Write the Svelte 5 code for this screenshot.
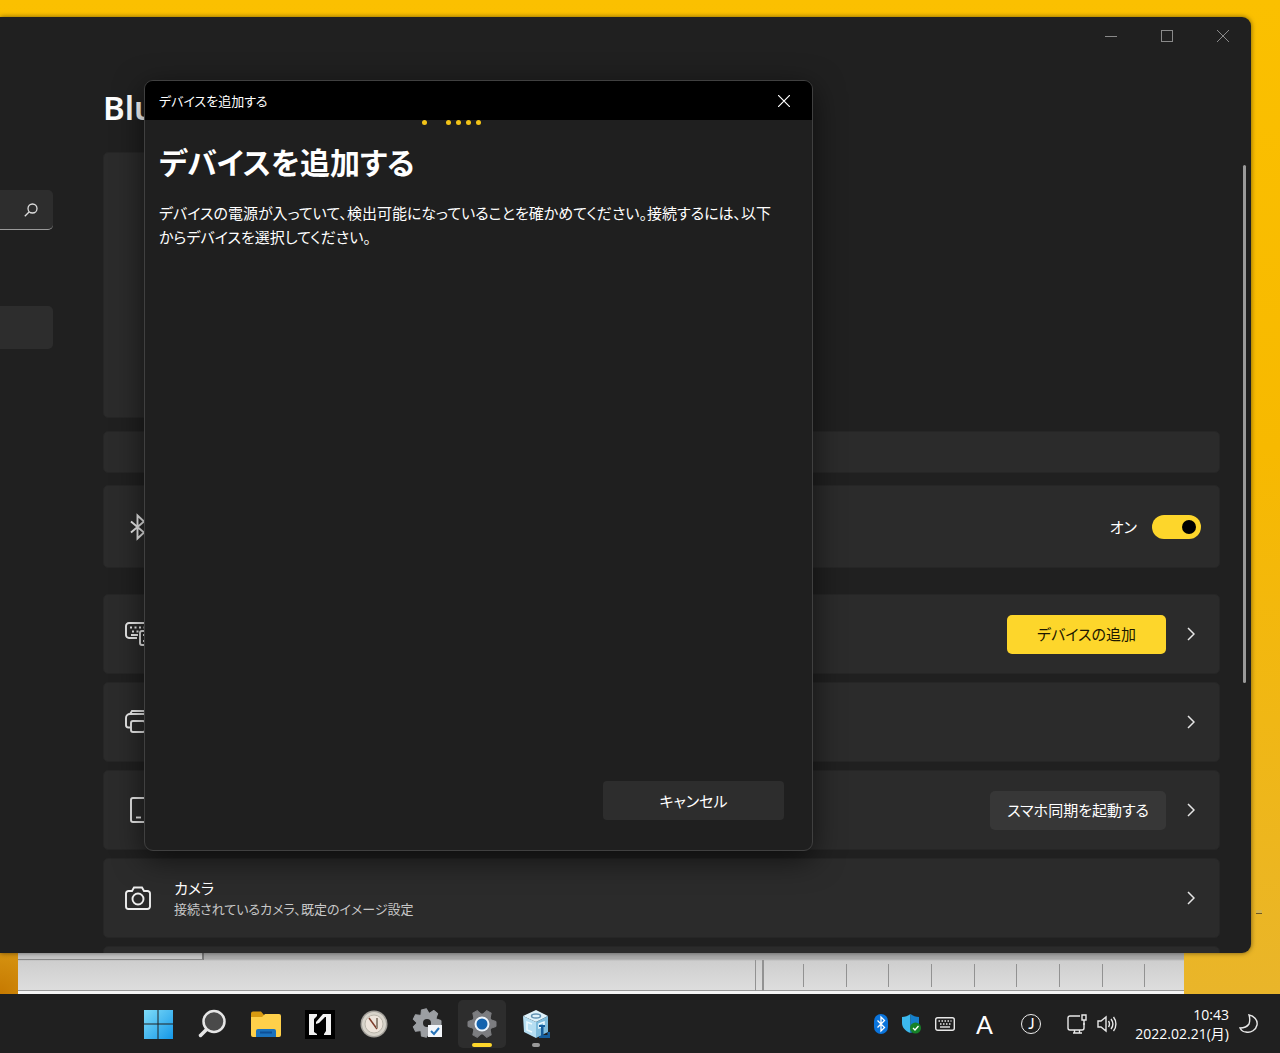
<!--
  App.svelte: desktop with the settings window behind the "add a device" dialog.
  The windows float on the desktop; everything inside them is laid out by flex.
-->
<script lang="ts">
	type Row = {
		icon: 'devices' | 'printer' | 'phone' | 'camera';
		label: string;
		title?: string;
		note?: string;
		action?: string;
		primary?: boolean;
	};

	const rows: Row[] = [
		{ icon: 'devices', label: 'デバイス', action: 'デバイスの追加', primary: true },
		{ icon: 'printer', label: 'プリンターとスキャナー' },
		{ icon: 'phone', label: 'スマホ同期', action: 'スマホ同期を起動する' },
		{
			icon: 'camera',
			label: 'カメラ',
			title: 'カメラ',
			note: '接続されているカメラ、既定のイメージ設定'
		}
	];

	const cells = Array.from({ length: 10 }, (_, i) => i);

	let bluetoothOn = $state(true);
	let dialogOpen = $state(true);

	const openDialog = (): void => {
		dialogOpen = true;
	};
	const closeDialog = (): void => {
		dialogOpen = false;
	};

	// tooth angles of a gear, the first one pointing right
	const teeth = (count: number): number[] =>
		Array.from({ length: count }, (_, i) => 90 + (360 / count) * i);
</script>

{#snippet rowIcon(name: string)}
	<svg class="row-icon" viewBox="0 0 28 28" aria-hidden="true">
		{#if name === 'devices'}
			<path d="M13 18H5a3 3 0 0 1-3-3V6a3 3 0 0 1 3-3h18a3 3 0 0 1 3 3v3" />
			<path d="M6 7.500h2M10.500 7.500h2M15 7.500h2M19.500 7.500h2M8 11.500h2M12.500 11.500h2M7 15h7" />
			<rect x="16" y="11" width="9" height="14" rx="2" />
			<path d="M19 15h3M19 21h3" />
		{:else if name === 'printer'}
			<path d="M6.500 19.500H4.500a2.500 2.500 0 0 1-2.500-2.500v-7a4 4 0 0 1 4-4h16a4 4 0 0 1 4 4v7a2.500 2.500 0 0 1-2.500 2.500h-2" />
			<path d="M6 6l2-3h12l2 3" />
			<rect x="7" y="13" width="14" height="11" rx="2" />
		{:else if name === 'phone'}
			<rect x="7" y="2" width="15" height="24" rx="2" />
			<path d="M12 21.500h5" />
		{:else}
			<path d="M4.500 7H8l2-3.500h8L20 7h3.500A2.500 2.500 0 0 1 26 9.500v13a2.500 2.500 0 0 1-2.500 2.500h-19A2.500 2.500 0 0 1 2 22.500v-13A2.500 2.500 0 0 1 4.500 7z" />
			<circle cx="14" cy="15" r="5.500" />
		{/if}
	</svg>
{/snippet}

{#snippet gear(cx: number, cy: number, count: number, fill: string)}
	<g {fill} stroke={fill} stroke-linejoin="round" transform="translate({cx} {cy})">
		<circle r="10" />
		{#each teeth(count) as angle}
			<path d="M-4.500-8L-2.500-14h5L4.500-8z" transform="rotate({angle})" />
		{/each}
	</g>
{/snippet}

<div class="desktop">
	<main class="workspace">
		<div class="sheet-window" aria-hidden="true">
			<div class="sheet-tab"></div>
			<div class="sheet-status">
				{#each cells as cell (cell)}
					<span></span>
				{/each}
			</div>
		</div>
		<div class="desk-mark" aria-hidden="true"></div>

		<section class="settings" aria-label="設定">
			<header class="caption">
				<button aria-label="最小化">
					<svg viewBox="0 0 12 12"><path d="M0 6.500h12" /></svg>
				</button>
				<button aria-label="最大化">
					<svg viewBox="0 0 12 12"><rect x=".5" y=".5" width="11" height="11" /></svg>
				</button>
				<button aria-label="閉じる">
					<svg viewBox="0 0 12 12"><path d="M0 0l12 12M12 0L0 12" /></svg>
				</button>
			</header>

			<div class="settings-body">
				<nav class="sidebar" aria-label="メニュー">
					<button class="search" aria-label="検索">
						<svg viewBox="0 0 14 14"><circle cx="8.500" cy="5.500" r="4.500" /><path d="M5.300 8.700L.8 13.200" /></svg>
					</button>
					<a class="nav-current" href="#devices" aria-label="デバイス"></a>
				</nav>

				<div class="content">
					<h1>Blu</h1>
					<div class="card preview"></div>
					<div class="card banner"></div>
					<div class="card bluetooth">
						<svg class="row-icon" viewBox="0 0 28 28" aria-hidden="true">
							<path d="M7 8.500l13 11-6.500 6v-23l6.500 6-13 11" />
						</svg>
						<label class="switch">
							<span>オン</span>
							<input type="checkbox" bind:checked={bluetoothOn} />
						</label>
					</div>
					<ul class="rows">
						{#each rows as row (row.icon)}
							<li class="card row">
								{@render rowIcon(row.icon)}
								<div class="row-text">
									{#if row.title}<span class="row-title">{row.title}</span>{/if}
									{#if row.note}<span class="row-note">{row.note}</span>{/if}
								</div>
								{#if row.action}
									<button class="action" class:primary={row.primary} onclick={openDialog}>{row.action}</button>
								{/if}
								<a class="more" href="#{row.icon}" aria-label={row.label}>
									<svg viewBox="0 0 8 14"><path d="M1 1l6 6-6 6" /></svg>
								</a>
							</li>
						{/each}
						<li class="card row"></li>
					</ul>
				</div>
				<div class="scrollbar"></div>
			</div>
		</section>

		{#if dialogOpen}
			<div class="dialog" role="dialog" aria-labelledby="dialog-title">
				<header class="dialog-bar">
					<span>デバイスを追加する</span>
					<button aria-label="閉じる" onclick={closeDialog}>
						<svg viewBox="0 0 12 12"><path d="M0 0l12 12M12 0L0 12" /></svg>
					</button>
				</header>
				<div class="progress" aria-hidden="true"><i></i><i></i><i></i><i></i><i></i></div>
				<div class="dialog-body">
					<h2 id="dialog-title">デバイスを追加する</h2>
					<p>
						デバイスの電源が入っていて、検出可能になっていることを確かめてください。接続するには、以下<br />からデバイスを選択してください。
					</p>
				</div>
				<footer class="dialog-foot">
					<button onclick={closeDialog}>キャンセル</button>
				</footer>
			</div>
		{/if}
	</main>

	<footer class="taskbar">
		<div class="apps">
			<button aria-label="スタート">
				<svg viewBox="0 0 32 32">
					<defs>
						<linearGradient id="win" x1="0" y1="0" x2="1" y2="1">
							<stop offset="0" stop-color="#7fdcf8" />
							<stop offset="1" stop-color="#1497e8" />
						</linearGradient>
					</defs>
					<path fill="url(#win)" d="M2 2h13.500v13.500H2zM16.500 2H31v13.500H16.500zM2 16.500h13.500V31H2zM16.500 16.500H31V31H16.500z" />
				</svg>
			</button>
			<button aria-label="検索">
				<svg viewBox="0 0 32 32">
					<path d="M10.500 21.500L4.500 27.500" stroke="#e6e6e6" stroke-width="3.500" stroke-linecap="round" />
					<circle cx="18" cy="13.500" r="10.500" fill="#4a4a4a" stroke="#e6e6e6" stroke-width="2.500" />
				</svg>
			</button>
			<button aria-label="エクスプローラー">
				<svg viewBox="0 0 32 32">
					<path d="M1 5.500a2 2 0 0 1 2-2h8l3 3.500v5H1z" fill="#d99a10" />
					<path d="M1 9h11l3-3h14a2 2 0 0 1 2 2v19a2 2 0 0 1-2 2H3a2 2 0 0 1-2-2z" fill="#ffd04a" />
					<path d="M6 29v-6a2 2 0 0 1 2-2h16a2 2 0 0 1 2 2v6z" fill="#1b72bd" />
					<path d="M10 24.500h12" stroke="#0d4f96" stroke-width="2" />
				</svg>
			</button>
			<button aria-label="エディター">
				<svg viewBox="0 0 32 32">
					<path d="M1 2h30v29H1z" fill="#000" />
					<path d="M5 6h8v2l-3 3v13l3 2v1H5z" fill="#f2f2f2" />
					<path d="M27 6h-8l-7 8v2l3-1 6-6h1v14l-2 3v1h7z" fill="#f2f2f2" />
				</svg>
			</button>
			<button aria-label="時計">
				<svg viewBox="0 0 32 32">
					<circle cx="16" cy="16" r="13.500" fill="#a3a09a" />
					<circle cx="16" cy="16" r="12" fill="#d8d4cb" />
					<circle cx="16" cy="16" r="9" fill="#eee5dc" stroke="#bab5aa" />
					<path d="M11 10l8 11" stroke="#7e3d2c" stroke-width="1.500" />
					<path d="M19 10v10" stroke="#94887b" stroke-width="2" />
				</svg>
			</button>
			<button aria-label="既定の設定">
				<svg viewBox="0 0 32 32">
					{@render gear(15, 15, 7, '#9c9fa3')}
					<circle cx="15" cy="15" r="4" fill="#252525" />
					<path d="M16 17h14v12H16z" fill="#f3f6fa" />
					<path d="M19 23l3 3 5-6" stroke="#2673b8" stroke-width="2" fill="none" />
				</svg>
			</button>
			<button class="active" aria-label="設定">
				<svg viewBox="0 0 32 32">
					{@render gear(16, 16, 6, '#7c7d80')}
					<circle cx="16" cy="16" r="7.500" fill="#eef5fb" />
					<circle cx="16" cy="16" r="5.500" fill="#1463ae" />
				</svg>
			</button>
			<button class="running" aria-label="ツール">
				<svg viewBox="0 0 32 32">
					<path d="M3 8l13-6 12 6-12 6z" fill="#dff2fb" />
					<path d="M3 8l13 6v16L4 24z" fill="#b5def2" />
					<path d="M28 8l-12 6v16l12-6z" fill="#7fbcdc" />
					<ellipse cx="16" cy="8" rx="4.500" ry="2" fill="none" stroke="#6393b4" stroke-width="1.500" />
					<path d="M12 16l-5-2v8l5 2M19 16l5-2v4l-5 2z" fill="none" stroke="#edfaff" stroke-width="1.500" />
					<path d="M19 17h6v2h-1.500v8h4v-3H30v6H19v-2h2v-9h-2z" fill="#155d9c" />
				</svg>
			</button>
		</div>

		<div class="tray">
			<svg class="tray-icon bt" viewBox="0 0 20 20" aria-hidden="true">
				<rect x="3" width="14" height="20" rx="7" fill="#0a74dc" />
				<path d="M6.500 6.500l7 7-3.500 3.500V3l3.500 3.500-7 7" stroke="#fff" stroke-width="1.300" fill="none" />
			</svg>
			<svg class="tray-icon" viewBox="0 0 20 20" aria-hidden="true">
				<path d="M9.500 0C7 2 4 3 1 3v6c0 4 3 8 8.500 10z" fill="#3cb9ee" />
				<path d="M9.500 0C12 2 15 3 18 3v6c0 4-3 8-8.500 10z" fill="#1580cc" />
				<circle cx="14.500" cy="14" r="5.500" fill="#168128" />
				<path d="M12 14l2 2 3.500-4" stroke="#fff" stroke-width="1.300" fill="none" />
			</svg>
			<svg class="tray-icon line keyboard" viewBox="0 0 20 20" aria-hidden="true">
				<rect x=".7" y="3.700" width="18.600" height="12.600" rx="2" />
				<path d="M3.500 7h13M5 10h11" stroke-dasharray="1.500 1.500" />
				<path d="M5 13h10" />
			</svg>
			<span class="ime-letter">A</span>
			<span class="ime-mode">J</span>
			<svg class="tray-icon line monitor" viewBox="0 0 20 20" aria-hidden="true">
				<path d="M13 2H3a2 2 0 0 0-2 2v10a2 2 0 0 0 2 2h12a2 2 0 0 0 2-2V9M6 19h9M7.500 16v3M12.500 16v3" />
				<path d="M15 1h4v5h-4zM17 6v5" />
			</svg>
			<svg class="tray-icon line" viewBox="0 0 20 20" aria-hidden="true">
				<path d="M1 7v6h3l5 4V3L4 7zM11.500 7c1.300 2 1.300 4 0 6M14 5c2.300 3 2.300 7 0 10M16.500 3c3.200 4 3.200 10 0 14" />
			</svg>
			<time class="clock" datetime="2022-02-21T10:43">
				<span>10:43</span>
				<span>2022.02.21(月)</span>
			</time>
			<svg class="tray-icon line moon" viewBox="0 0 20 20" aria-hidden="true">
				<path d="M10 1c5 1 9 5 8 10-1 5-6 8-11 7-3-0-5-2-6-4 4 0 7-1 9-4 1-3 1-6 0-9z" />
			</svg>
		</div>
	</footer>
</div>

<style>
	:global(body) {
		background: #202020;
	}

	.desktop {
		display: flex;
		flex-direction: column;
		min-height: 100vh;
		overflow: hidden;
		color: #fff;
		font-family: 'Open Sans', 'Noto Sans CJK JP', sans-serif;
		font-size: 15px;
		line-height: 24px;
		/* kana use their own widths, as in the system UI face */
		font-feature-settings: 'palt';
	}

	button {
		padding: 0;
		border: 0;
		background: none;
		color: inherit;
		font: inherit;
		font-feature-settings: inherit;
	}

	svg {
		display: block;
		fill: none;
	}

	.workspace {
		position: relative;
		flex: 1;
		overflow: hidden;
		background:
			radial-gradient(circle at 0 100%, #c67900 0, transparent 100px),
			linear-gradient(#fbc000, #f7b900 45%, #e9b52a);
	}

	/* Spreadsheet window peeking out below the settings window */
	.sheet-window {
		position: absolute;
		left: 18px;
		right: 96px;
		bottom: 0;
		box-sizing: border-box;
		height: 60px;
		display: flex;
		flex-direction: column;
		overflow: hidden;
		border-bottom: 3px solid #f4f4f4;
		background: linear-gradient(#a9a9a9 25px, #cecece 27px, #dedede);
		box-shadow: inset 0 -1px #999;
	}

	.sheet-tab {
		box-sizing: border-box;
		width: 186px;
		height: 26px;
		border-right: 2px solid #777;
		border-bottom: 1px solid #888;
		background: #c5c5c5;
	}

	.sheet-status {
		display: flex;
		flex: 1;
		width: 432px;
		margin-left: auto;
		margin-right: -3px;
	}

	.sheet-status span {
		box-sizing: border-box;
		flex: 1;
		margin: 4px 0;
		border-left: 1px solid #929292;
	}

	.sheet-status span:first-child {
		flex: 0 0 48px;
		margin: 0;
		background: linear-gradient(#929292, #929292) 6px 0 / 2px 100% no-repeat;
	}

	.desk-mark {
		position: absolute;
		right: 18px;
		bottom: 80px;
		width: 6px;
		height: 3px;
		border-bottom: 1px solid #6e5720;
		background: #d8b54c;
	}

	.settings {
		position: absolute;
		inset: 17px 29px 41px 0;
		display: flex;
		flex-direction: column;
		overflow: hidden;
		border-radius: 0 9px 9px 0;
		background: #202020;
		box-shadow: 0 0 5px #0008;
	}

	.caption {
		display: flex;
		justify-content: flex-end;
		flex: none;
		height: 38px;
	}

	.caption button {
		display: grid;
		place-items: center;
		width: 56px;
	}

	.caption svg {
		width: 12px;
		height: 12px;
		stroke: #8a8a8a;
	}

	.settings-body {
		display: flex;
		flex: 1;
		min-height: 0;
	}

	.sidebar {
		flex: none;
		width: 53px;
		display: flex;
		flex-direction: column;
		gap: 76px;
		padding-top: 135px;
	}

	.search {
		display: flex;
		align-items: center;
		justify-content: flex-end;
		height: 40px;
		box-sizing: border-box;
		padding-right: 15px;
		border-bottom: 1px solid #9a9a9a;
		border-radius: 0 5px 5px 0;
		background: #2d2d2d;
	}

	.search svg {
		width: 14px;
		height: 14px;
		stroke: #ddd;
		stroke-width: 1.3;
	}

	.nav-current {
		height: 43px;
		border-radius: 0 5px 5px 0;
		background: #2d2d2d;
	}

	.content {
		flex: 1;
		min-width: 0;
		display: flex;
		flex-direction: column;
		padding-left: 50px;
	}

	h1 {
		flex: none;
		margin: 29px 0 20px;
		font-family: 'Noto Sans', sans-serif;
		font-size: 33px;
		font-weight: 600;
		line-height: 48px;
	}

	.card {
		flex: none;
		box-sizing: border-box;
		border: 1px solid #262626;
		border-radius: 5px;
		background: #2b2b2b;
	}

	.preview {
		width: 30%;
		height: 266px;
	}

	.banner {
		height: 42px;
		margin-top: 13px;
	}

	.bluetooth {
		display: flex;
		align-items: center;
		justify-content: space-between;
		height: 83px;
		margin: 12px 0 26px;
		padding: 0 18px 0 20px;
	}

	.row-icon {
		flex: none;
		width: 28px;
		height: 28px;
		stroke: #eee;
		stroke-width: 1.9;
	}

	.switch {
		display: flex;
		align-items: center;
		gap: 15px;
	}

	.switch input {
		appearance: none;
		width: 49px;
		height: 24px;
		margin: 0;
		border-radius: 12px;
		background: #666;
	}

	.switch input::before {
		content: '';
		display: block;
		width: 14px;
		height: 14px;
		margin: 5px;
		border-radius: 50%;
		background: #000;
	}

	.switch input:checked {
		background: #fdd62b;
	}

	.switch input:checked::before {
		margin-left: 30px;
	}

	.rows {
		display: flex;
		flex-direction: column;
		gap: 8px;
		margin: 0;
		padding: 0;
		list-style: none;
	}

	.row {
		display: flex;
		align-items: center;
		height: 80px;
		padding: 0 24px 0 20px;
	}

	.row-text {
		flex: 1;
		display: flex;
		flex-direction: column;
		padding-left: 22px;
	}

	.row-title {
		line-height: 22px;
	}

	.row-note {
		color: #c8c8c8;
		font-size: 13px;
		line-height: 20px;
	}

	.action {
		height: 39px;
		padding: 0 17px;
		border-radius: 5px;
		background: #373737;
	}

	.action.primary {
		padding: 0 30px;
		background: #fdd62b;
		color: #1c1700;
	}

	.more svg {
		width: 8px;
		height: 14px;
		margin-left: 21px;
		stroke: #e6e6e6;
		stroke-width: 1.5;
	}

	.scrollbar {
		flex: none;
		width: 3px;
		height: 518px;
		margin: 110px 5px 0 23px;
		border-radius: 2px;
		background: #9a9a9a;
	}

	.dialog {
		position: absolute;
		inset: 80px 467px 143px 144px;
		display: flex;
		flex-direction: column;
		overflow: hidden;
		border: 1px solid #404040;
		border-radius: 9px;
		background: #1f1f1f;
		box-shadow: 0 8px 30px #0009;
	}

	.dialog-bar {
		display: flex;
		align-items: center;
		justify-content: space-between;
		height: 39px;
		padding-left: 14px;
		background: #000;
		font-size: 13px;
	}

	.dialog-bar button {
		display: grid;
		place-items: center;
		width: 56px;
		height: 37px;
	}

	.dialog-bar svg {
		width: 12px;
		height: 12px;
		stroke: #fff;
		stroke-width: 1.2;
	}

	.progress {
		display: flex;
		gap: 5px;
		height: 5px;
		padding-left: 41.5%;
	}

	.progress i {
		width: 5px;
		height: 5px;
		border-radius: 50%;
		background: #f2c318;
	}

	.progress i:first-child {
		margin-right: 14px;
	}

	.dialog-body {
		flex: 1;
		padding: 14px 14px 0;
	}

	h2 {
		margin: 0 0 14px;
		font-size: 30px;
		font-weight: 600;
		line-height: 48px;
	}

	p {
		margin: 0;
	}

	.dialog-foot {
		display: flex;
		justify-content: flex-end;
		padding: 0 28px 30px;
	}

	.dialog-foot button {
		width: 181px;
		height: 39px;
		border-radius: 4px;
		background: #2d2d2d;
	}

	.taskbar {
		display: flex;
		align-items: center;
		justify-content: space-between;
		flex: none;
		height: 59px;
		padding: 0 21px 0 134px;
		background: #202020;
	}

	.apps {
		display: flex;
		gap: 6px;
	}

	.apps button {
		position: relative;
		display: grid;
		place-items: center;
		width: 48px;
		height: 48px;
		border-radius: 5px;
	}

	.apps svg {
		width: 32px;
		height: 32px;
	}

	.apps .active {
		background: #2d2d2d;
	}

	.apps .active::after,
	.apps .running::after {
		content: '';
		position: absolute;
		bottom: 1px;
		width: 20px;
		height: 4px;
		border-radius: 2px;
		background: #fdd62b;
	}

	.apps .running::after {
		width: 8px;
		background: #999;
	}

	.tray {
		display: flex;
		align-items: center;
	}

	.tray-icon {
		width: 20px;
		height: 20px;
		margin-right: 10px;
	}

	.tray-icon.line {
		stroke: #e8e8e8;
		stroke-width: 1.4;
	}

	.keyboard {
		margin: 0 20px 0 4px;
	}

	.ime-letter {
		width: 18px;
		margin-right: 28px;
		font-family: Lato, sans-serif;
		font-size: 25px;
		text-align: center;
	}

	.ime-mode {
		box-sizing: border-box;
		width: 20px;
		height: 20px;
		margin-right: 26px;
		border: 1px solid #eee;
		border-radius: 50%;
		font-family: Lato, sans-serif;
		font-size: 15px;
		line-height: 17px;
		text-align: center;
	}

	.clock {
		display: flex;
		flex-direction: column;
		align-items: flex-end;
		margin: 0 10px 0 8px;
		font-size: 14px;
		line-height: 19px;
	}

	.moon {
		margin: 0;
	}
</style>
